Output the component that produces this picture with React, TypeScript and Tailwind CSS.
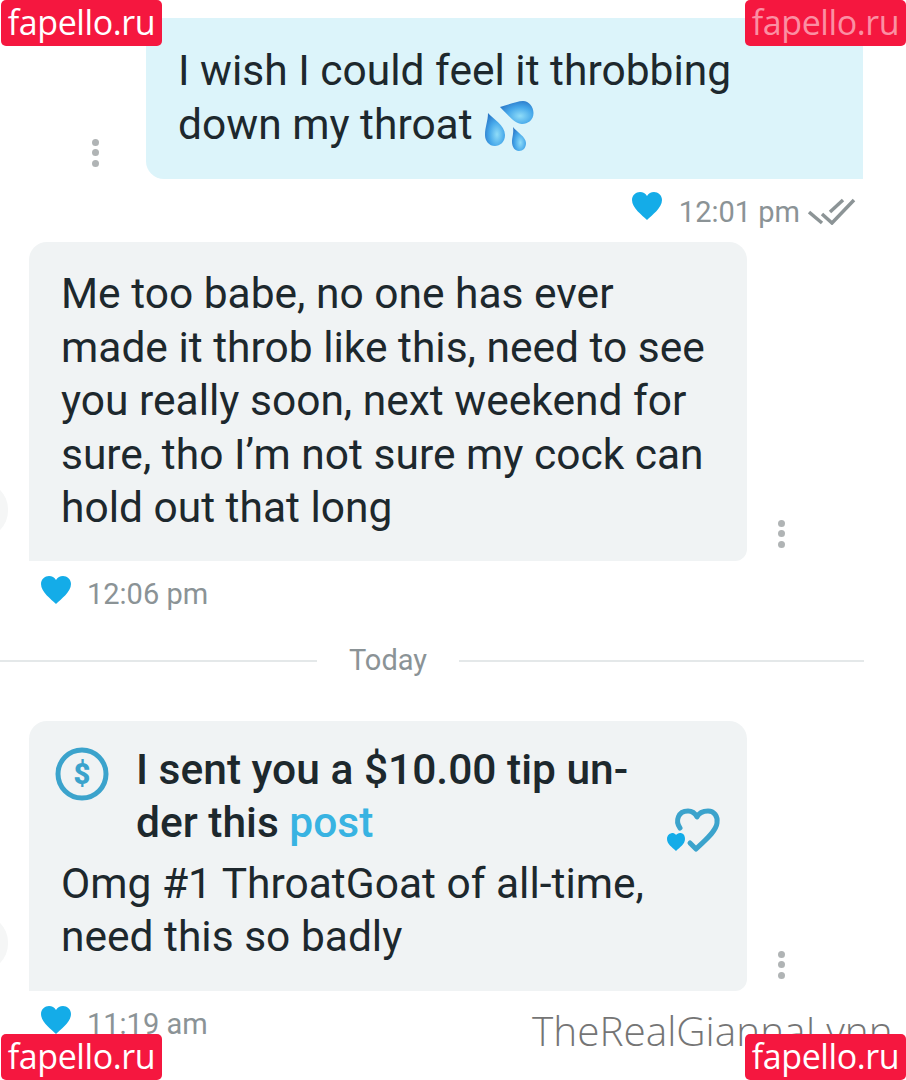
const font = "font-['Roboto','Liberation_Sans',sans-serif]";

function Badge({ faded }: { faded?: boolean }) {
  return (
    <div
      className={`flex h-[46px] w-[161px] items-center justify-center rounded-[5px] bg-[#f5173f] pb-[3px] font-['Open_Sans',sans-serif] text-[34px] leading-none tracking-[-0.4px] ${faded ? 'text-[#fb8fa3]' : 'text-white'}`}
    >
      fapello.ru
    </div>
  );
}

function Heart({ className }: { className: string }) {
  return (
    <svg viewBox="0 0 32 30" className={className}>
      <path
        d="M16 29 C11 24 1 17 1 9 C1 4 5 1 9 1 C12 1 14.500 2.500 16 5 C17.500 2.500 20 1 23 1 C27 1 31 4 31 9 C31 17 21 24 16 29Z"
        fill="#14ace8"
      />
    </svg>
  );
}

function Dots({ className }: { className: string }) {
  return (
    <div className={`flex w-[7px] flex-col gap-[3.600px] ${className}`}>
      <span className="h-[7px] w-[7px] rounded-full bg-[#b0b4b5]" />
      <span className="h-[7px] w-[7px] rounded-full bg-[#b0b4b5]" />
      <span className="h-[7px] w-[7px] rounded-full bg-[#b0b4b5]" />
    </div>
  );
}

function Stamp({ time }: { time: string }) {
  return (
    <div className="mt-[9px] flex h-[50px] items-center gap-[15px] pl-[40px]">
      <Heart className="mb-[10px] h-[30px] w-[32px]" />
      <span className="text-[29px] text-[#8b9396]">{time}</span>
    </div>
  );
}

export default function App() {
  return (
    <div className={`relative h-[1080px] w-[906px] overflow-hidden bg-white ${font}`}>
      {/* sent message */}
      <div className="flex items-end pl-[92px]">
        <Dots className="mb-[12px]" />
        <div className="ml-[47px] mt-[18px] h-[161px] w-[717px] rounded-l-[18px] bg-[#dcf4fa] pl-[32px] pt-[26px] text-[42.500px] leading-[54px] text-[#1d282d]">
          I wish I could feel it throbbing
          <br />
          down my throat{' '}
          <svg viewBox="12 6 49 50" className="ml-[2px] inline h-[50px] w-[49px] align-[-12px]">
            <defs>
              <radialGradient id="drop" cx="0.6" cy="0.65" r="0.7">
                <stop offset="0" stopColor="#8fdcf8" />
                <stop offset="0.55" stopColor="#46a8ea" />
                <stop offset="1" stopColor="#2a78c8" />
              </radialGradient>
            </defs>
            <path d="M27 12 C35 10 44 6 50 6 C56 6 60.500 12 60.500 18 C60.500 25 55 29 49 29 C42 29 35 20 27 12Z" fill="url(#drop)" />
            <path d="M15 18 C20 24 32 30 32 40 C32 47 27 51 22 51 C16 51 12 46 12 40 C12 32 15 26 15 18Z" fill="url(#drop)" />
            <path d="M40 32 C44 37 53 42 53 48 C53 53 50 56 46 56 C42 56 39 52 39 47 C39 42 41 38 40 32Z" fill="url(#drop)" />
          </svg>
        </div>
      </div>
      <div className="mr-[50px] mt-[9px] flex h-[45px] items-start justify-end">
        <Heart className="mt-[3px] h-[30px] w-[32px]" />
        <span className="ml-[16px] mt-[3px] text-[29px] text-[#8b9396]">12:01 pm</span>
        <svg viewBox="0 0 48 30" className="ml-[8px] mt-[7px] h-[30px] w-[48px]" fill="none" stroke="#8c9496" strokeWidth="3.500">
          <path d="M1 17 L14 28" />
          <path d="M14 19 L24 28 L46 5" />
          <path d="M22 17 L35 5" />
        </svg>
      </div>

      {/* received message */}
      <div className="relative mt-[9px] flex items-end">
        <div className="ml-[29px] h-[319px] w-[718px] rounded-t-[18px] rounded-br-[12px] bg-[#f0f3f4] pl-[32px] pt-[25px] text-[42.500px] leading-[53.500px] text-[#1d282d]">
          Me too babe, no one has ever
          <br />
          made it throb like this, need to see
          <br />
          you really soon, next weekend for
          <br />
          sure, tho I’m not sure my cock can
          <br />
          hold out that long
        </div>
        <Dots className="mb-[13px] ml-[31px]" />
        <div className="absolute -left-[46px] top-[240px] h-[56px] w-[54px] rounded-full bg-[#f5f6f6]" />
      </div>
      <Stamp time="12:06 pm" />

      {/* day divider */}
      <div className="mt-[21px] flex h-[40px] w-[864px] items-center">
        <div className="h-[2px] flex-1 bg-[#e4e8e9]" />
        <span className="w-[142px] text-center text-[29px] text-[#8b9396]">Today</span>
        <div className="h-[2px] w-[405px] bg-[#e4e8e9]" />
      </div>

      {/* tip message */}
      <div className="relative mt-[40px] flex items-end">
        <div className="relative ml-[29px] h-[270px] w-[718px] rounded-t-[18px] rounded-br-[12px] bg-[#f0f3f4] pt-[22px] text-[#1d282d]">
          <div className="flex pl-[26px]">
            <svg viewBox="0 0 54 54" className="mt-[4px] h-[54px] w-[54px]">
              <circle cx="27" cy="27" r="24" fill="none" stroke="#3ba3cc" strokeWidth="5" />
              <text x="27" y="37" textAnchor="middle" fontSize="29" fontWeight="900" fill="#3ba3cc" fontFamily="Roboto, sans-serif">
                $
              </text>
            </svg>
            <div className="ml-[27px] text-[42.500px] font-medium leading-[53px]">
              I sent you a $10.00 tip un-
              <br />
              der this <span className="text-[#38b3e2]">post</span>
            </div>
          </div>
          <div className="mt-[8px] pl-[32px] text-[42.500px] leading-[53px]">
            Omg #1 ThroatGoat of all-time,
            <br />
            need this so badly
          </div>
          <svg viewBox="0 0 56 46" className="absolute right-[25px] top-[86px] h-[46px] w-[56px]" fill="none">
            <path d="M14 21 C9 14 12 4 22 4 C26 4 29 6 31 10 C33 6 37 4 42 4 C48 4 52 9 51 16 C50 25 38 34 30 42 L24 36" stroke="#3ba3cc" strokeWidth="5" strokeLinecap="round" strokeLinejoin="round" />
            <path d="M10 44 C6 40 1 37 1 32 C1 28 4 26 7 26 C8 26 9.500 27 10 28 C11 27 12 26 14 26 C17 26 19 28 19 32 C19 37 14 40 10 44Z" fill="#14ace8" />
          </svg>
        </div>
        <Dots className="mb-[12px] ml-[31px]" />
        <div className="absolute -left-[46px] top-[194px] h-[56px] w-[54px] rounded-full bg-[#f5f6f6]" />
      </div>
      <Stamp time="11:19 am" />

      {/* watermark text and corner badges */}
      <span className="absolute left-[532px] top-[1001px] whitespace-nowrap font-['Open_Sans',sans-serif] text-[40.500px] font-light text-[#757575]">
        TheRealGiannaLynn
      </span>
      <div className="absolute left-[1px] top-0"><Badge /></div>
      <div className="absolute right-0 top-0"><Badge faded /></div>
      <div className="absolute bottom-0 left-[1px]"><Badge /></div>
      <div className="absolute bottom-0 right-0"><Badge /></div>
    </div>
  );
}
